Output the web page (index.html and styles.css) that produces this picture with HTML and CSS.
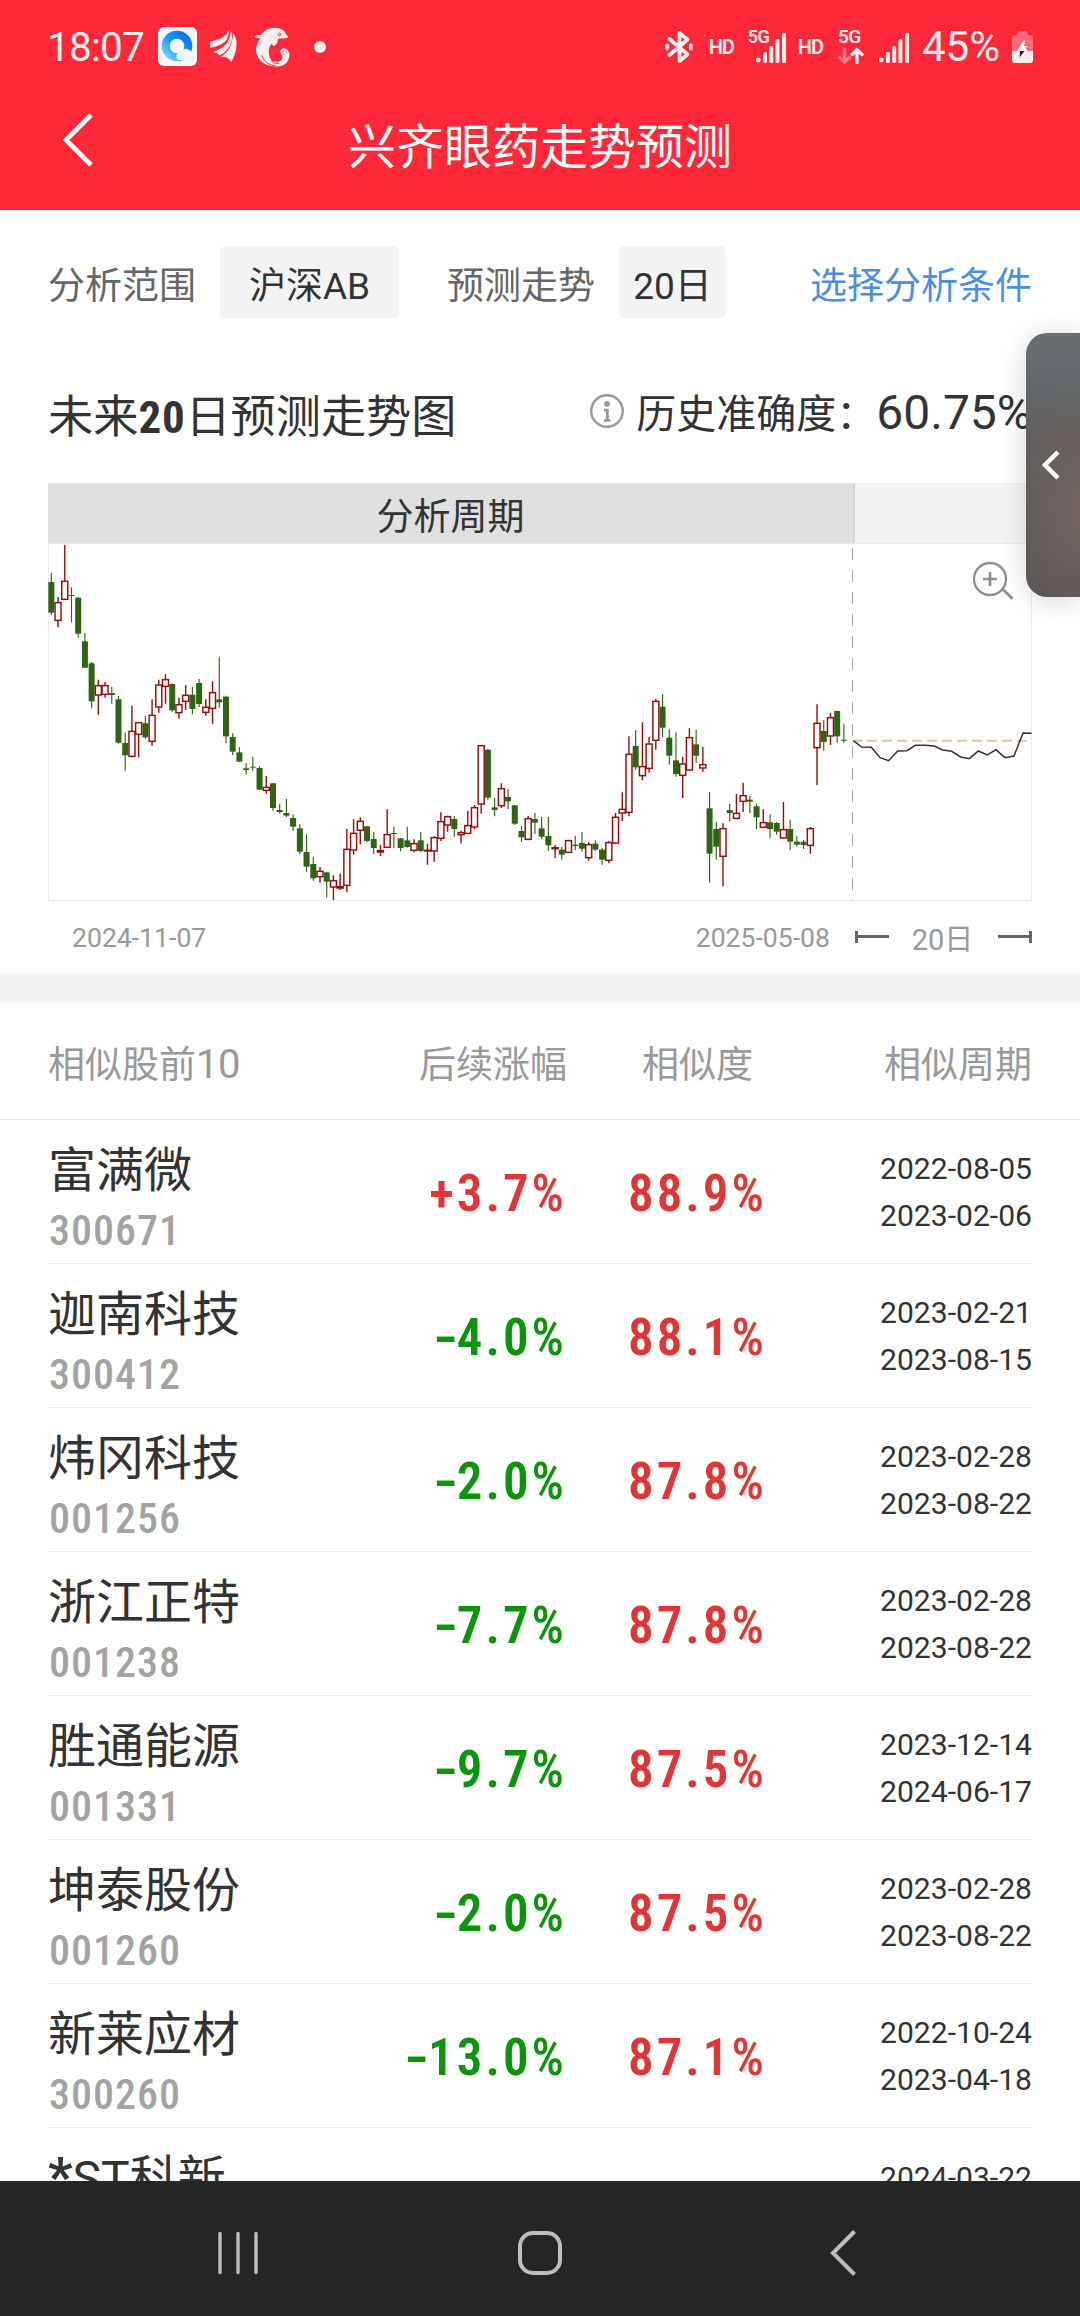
FILE: index.html
```html
<!DOCTYPE html>
<html lang="zh-CN">
<head>
<meta charset="utf-8">
<title>兴齐眼药走势预测</title>
<link rel="stylesheet" href="styles.css">
</head>
<body>
<div class="screen">
  <header class="top">
    <div class="status">
      <div class="status-left">
        <span class="clock">18:07</span>
        <svg class="ic-browser" viewBox="0 0 39 39" width="39" height="39">
          <defs>
            <linearGradient id="ring" x1="0" y1="1" x2="1" y2="0"><stop offset="0" stop-color="#7fd0fb"/><stop offset=".5" stop-color="#0a9bf5"/><stop offset="1" stop-color="#0a6ff0"/></linearGradient>
          </defs>
          <rect width="39" height="39" rx="6" fill="#f6f8fc"/>
          <circle cx="19" cy="19" r="11.3" fill="none" stroke="url(#ring)" stroke-width="8"/>
          <path d="M20 33a4.500 4.500 0 0 1 2-8 6 6 0 0 1 9-2 4 4 0 0 1 3 4 3.500 3.500 0 0 1-1 6z" fill="#edf5fd"/>
        </svg>
        <svg class="ic-wing" viewBox="180 30 90 100" width="30" height="33" fill="#ffeef0">
          <path d="M183 84V66C208 58 228 56 239 30 243 58 226 76 183 84Z"/>
          <path d="M188 98C226 84 243 70 246 32 256 62 242 92 211 107 205 99 198 97 188 98Z"/>
          <path d="M214 113C238 96 252 76 252 38 270 60 265 95 247 128 240 114 230 110 214 113Z"/>
        </svg>
        <svg class="ic-dolphin" viewBox="308 19 112 120" width="37" height="40">
          <path d="M311 50C316 43 322 42 331 43 344 24 368 17 387 22 400 26 406 33 407 40L415 48C411 54 400 53 386 53 381 58 385 68 372 76 367 76 367 69 363 70 353 85 353 108 366 121 384 128 400 121 396 105 392 98 387 95 393 86 405 77 420 90 418 106 415 130 398 139 375 138 343 136 324 122 317 94 316 77 323 62 330 54 324 52 317 49 311 50Z" fill="#ffeef0"/>
          <circle cx="388" cy="41" r="4" fill="none" stroke="#ff2838" stroke-width="3"/>
          <path d="M334 104C343 125 357 134 376 136M363 121Q371 130 386 129" fill="none" stroke="#ff2838" stroke-width="3"/>
          <circle cx="405" cy="96" r="6" fill="none" stroke="#ff8a94" stroke-width="2"/>
        </svg>
        <i class="dot"></i>
      </div>
      <div class="status-right">
        <svg class="ic-bt" viewBox="0 0 28 34" width="28" height="34" fill="none" stroke="#ffeef0" stroke-width="3.800" stroke-linejoin="round" stroke-linecap="round"><path d="M4.500 9 22.500 24.500 14.500 31V3L22.500 9.500 4.500 25M2.200 15.500v3M25.800 15.500v3"/></svg>
        <span class="hd hd-a">HD</span>
        <span class="net net-a">5G</span>
        <svg class="sig-a" viewBox="0 0 30 30" width="30" height="30" fill="#ffeef0"><circle cx="2.300" cy="27" r="2.400"/><rect x="7" y="19" width="4" height="11" rx="1.500"/><rect x="13.200" y="13" width="4" height="17" rx="1.500"/><rect x="19.400" y="6" width="4" height="24" rx="1.500"/><rect x="26" y="0" width="4" height="30" rx="1.500"/></svg>
        <span class="hd hd-b">HD</span>
        <div class="net-b"><span class="net">5G</span>
          <svg viewBox="0 0 26 16" width="26" height="16" fill="none" stroke-width="3.200" stroke-linecap="round" stroke-linejoin="round"><path d="M6.500 1.500V14M1.600 9.500 6.500 14.200 11.400 9.500" stroke="#ff7d88"/><path d="M19 14.500V2M14 6.500 19 1.700 24 6.500" stroke="#fff"/></svg>
        </div>
        <svg class="sig-b" viewBox="0 0 30 30" width="30" height="30" fill="#ffeef0"><circle cx="2.300" cy="27" r="2.400"/><rect x="7" y="19" width="4" height="11" rx="1.500"/><rect x="13.200" y="13" width="4" height="17" rx="1.500"/><rect x="19.400" y="6" width="4" height="24" rx="1.500"/><rect x="26" y="0" width="4" height="30" rx="1.500"/></svg>
        <span class="battery-text">45%</span>
        <svg class="ic-battery" viewBox="0 0 21 32" width="21" height="32"><path d="M7 0h7q1.500 0 1.500 2v2H18q3 0 3 3v14H0V7q0-3 3-3h2.500V2Q5.500 0 7 0Z" fill="#ff6a76"/><path d="M0 20h21v9q0 3-3 3H3q-3 0-3-3Z" fill="#ffeef0"/><path d="M11.500 9.500 5 20h5.500L12 20h3.500l-2-3.500 2.500-1.500h-4l1-5.500Z" fill="#fff"/><path d="M8 20h4.500l-5 6.500Z" fill="#222"/></svg>
      </div>
    </div>
    <div class="titlebar">
      <svg class="back" viewBox="0 0 34 56" width="34" height="56" fill="none" stroke="#fff" stroke-width="4.600"><path d="M30 3 5 28 30 53"/></svg>
      <h1 class="title">兴齐眼药走势预测</h1>
    </div>
  </header>

  <main class="content">
    <section class="filters">
      <span class="label">分析范围</span>
      <button class="chip chip-scope">沪深AB</button>
      <span class="label label-trend">预测走势</span>
      <button class="chip chip-days">20日</button>
      <a class="link">选择分析条件</a>
    </section>

    <section class="heading">
      <h2 class="heading-title">未来<b>20</b>日预测走势图</h2>
      <div class="accuracy">
        <svg viewBox="0 0 34 34" width="34" height="34" fill="none" stroke="#999" stroke-width="2.400"><circle cx="17" cy="17" r="15.800"/><circle cx="17" cy="9.800" r="2.900" fill="#999" stroke="none"/><path d="M14 16h4M14 26.500h6.500" /><path d="M17.300 15v12" stroke-width="3"/></svg>
        <span class="accuracy-label">历史准确度：</span>
        <span class="accuracy-value">60.75%</span>
      </div>
    </section>

    <section class="chart">
      <div class="chart-head"><div class="period">分析周期</div><div class="future"></div></div>
      <svg class="plot" viewBox="0 39 2952 1074" width="984" height="358">
        <rect x="1.500" y="40.500" width="2949" height="1071" fill="none" stroke="#eaeaea" stroke-width="3"/>
        <g id="candles"></g>
        <path d="M2413.500 54V1113" stroke="#aaa" stroke-width="3" stroke-dasharray="36 30"/>
        <path d="M2416 632.500H2937" stroke="#efc096" stroke-width="6" stroke-dasharray="30 15" stroke-dashoffset="4"/>
        <polyline points="2416,632 2441,651 2470,652 2496,683 2522,692 2549,663 2577,662 2602,646 2631,646 2659,648 2684,660 2711,664 2738,681 2764,686 2791,663 2818,675 2844,659 2871,683 2898,678 2925,609 2951,610" fill="none" stroke="#333" stroke-width="4.500"/>
        <g fill="none" stroke="#8f8f8f" stroke-width="7"><circle cx="2826" cy="147" r="48"/><path d="M2826 126v42M2805 147h42M2863 177 2894 206" stroke-width="8"/></g>
      </svg>
      <div class="axis">
        <span class="axis-start">2024-11-07</span>
        <span class="axis-end">2025-05-08</span>
        <i class="mark mark-left"></i>
        <span class="axis-days">20日</span>
        <i class="mark mark-right"></i>
      </div>
    </section>

    <section class="table">
      <div class="row table-head"><span>相似股前<span class="count">10</span></span><span class="c-change">后续涨幅</span><span class="c-sim">相似度</span><span class="c-dates">相似周期</span></div>
      <div class="row"><div class="stock"><span class="name">富满微</span><span class="code">300671</span></div><span class="c-change up">+3.7<em>%</em></span><span class="c-sim up">88.9<em>%</em></span><div class="c-dates"><span>2022-08-05</span><span>2023-02-06</span></div></div>
      <div class="row"><div class="stock"><span class="name">迦南科技</span><span class="code">300412</span></div><span class="c-change down"><i class="sign">-</i>4.0<em>%</em></span><span class="c-sim up">88.1<em>%</em></span><div class="c-dates"><span>2023-02-21</span><span>2023-08-15</span></div></div>
      <div class="row"><div class="stock"><span class="name">炜冈科技</span><span class="code">001256</span></div><span class="c-change down"><i class="sign">-</i>2.0<em>%</em></span><span class="c-sim up">87.8<em>%</em></span><div class="c-dates"><span>2023-02-28</span><span>2023-08-22</span></div></div>
      <div class="row"><div class="stock"><span class="name">浙江正特</span><span class="code">001238</span></div><span class="c-change down"><i class="sign">-</i>7.7<em>%</em></span><span class="c-sim up">87.8<em>%</em></span><div class="c-dates"><span>2023-02-28</span><span>2023-08-22</span></div></div>
      <div class="row"><div class="stock"><span class="name">胜通能源</span><span class="code">001331</span></div><span class="c-change down"><i class="sign">-</i>9.7<em>%</em></span><span class="c-sim up">87.5<em>%</em></span><div class="c-dates"><span>2023-12-14</span><span>2024-06-17</span></div></div>
      <div class="row"><div class="stock"><span class="name">坤泰股份</span><span class="code">001260</span></div><span class="c-change down"><i class="sign">-</i>2.0<em>%</em></span><span class="c-sim up">87.5<em>%</em></span><div class="c-dates"><span>2023-02-28</span><span>2023-08-22</span></div></div>
      <div class="row"><div class="stock"><span class="name">新莱应材</span><span class="code">300260</span></div><span class="c-change down"><i class="sign">-</i>13.0<em>%</em></span><span class="c-sim up">87.1<em>%</em></span><div class="c-dates"><span>2022-10-24</span><span>2023-04-18</span></div></div>
      <div class="row"><div class="stock"><span class="name"><b>*</b>ST科新</span></div><span></span><span></span><div class="c-dates c-dates-top"><span>2024-03-22</span></div></div>
    </section>
  </main>

  <nav class="navbar">
    <svg viewBox="0 0 44 44" width="44" height="44" stroke="#bdbdbd" stroke-width="3.400" stroke-linecap="round"><path d="M4 2.500v39M22 2.500v39M40 2.500v39"/></svg>
    <svg viewBox="0 0 46 46" width="46" height="46" fill="none" stroke="#bdbdbd" stroke-width="4"><rect x="3" y="3" width="40" height="40" rx="13"/></svg>
    <svg viewBox="0 0 44 46" width="44" height="46" fill="none" stroke="#bdbdbd" stroke-width="4"><path d="M34.500 1.500 13 23 34.500 44.500"/></svg>
  </nav>

  <aside class="edge-panel"><svg viewBox="0 0 18 32" width="18" height="32" fill="none" stroke="#fff" stroke-width="4.500"><path d="M16 3 3 16 16 29"/></svg></aside>
</div>
<script src="chart.js"></script>
</body>
</html>
```
FILE: styles.css
```css
* { box-sizing: border-box; }
body { margin: 0; font-family: Roboto, "Noto Sans CJK SC", sans-serif; color: #333; background: #fff; }
h1, h2 { margin: 0; font-weight: 400; }
i { font-style: normal; }
svg { display: block; flex: none; }
.screen { position: relative; display: flex; flex-direction: column; width: 1080px; height: 2316px; overflow: hidden; }

.top { flex: none; height: 210px; background: #ff2838; color: #fff; }
.status { display: flex; justify-content: space-between; height: 93px; padding: 0 47px; color: #ffeef0; }
.status-left, .status-right { display: flex; align-items: center; }
.clock { width: 111px; font-size: 40.500px; letter-spacing: -.8px; }
.ic-wing { margin-left: 12px; }
.ic-dolphin { margin-left: 14px; }
.dot { width: 12px; height: 12px; margin-left: 24px; border-radius: 50%; background: #ffeef0; }
.hd { font-size: 20px; font-weight: 600; line-height: 20px; letter-spacing: -1px; }
.hd-a { margin-left: 16px; }
.net { font-size: 19px; font-weight: 600; line-height: 16px; letter-spacing: -.5px; }
.net-a { align-self: flex-start; margin: 29px 0 0 14px; width: 8px; font-size: 18px; white-space: nowrap; }
.sig-a { margin-top: 3px; }
.hd-b { margin-left: 12px; }
.net-b { display: flex; flex-direction: column; width: 26px; height: 35px; justify-content: space-between; margin-left: 15px; }
.sig-b { margin: 3px 0 0 15px; }
.battery-text { width: 91px; padding-left: 13px; font-size: 42px; letter-spacing: 0; }
.ic-battery { margin-left: 12px; }
.titlebar { display: grid; grid-template-columns: 200px 1fr 200px; height: 117px; }
.back { margin: 19px 0 0 61px; }
.title { margin-top: 20px; text-align: center; font-size: 48px; line-height: 70px; font-weight: 400; color: #fff; }

.content { flex: 1; min-height: 0; overflow: hidden; }
.filters { display: flex; align-items: center; padding: 36px 48px 0; height: 108px; font-size: 37px; }
.label { width: 172px; padding-top: 1px; color: #666; white-space: nowrap; }
.label-trend { width: 172px; margin-left: 48px; }
.chip { height: 72px; padding: 1px 0 0; border: 0; border-radius: 5px; background: #f4f4f4; color: #333; font: inherit; }
.chip-scope { width: 179px; }
.chip-days { width: 107px; }
.link { margin-left: auto; padding-top: 1px; color: #4a90e2; white-space: nowrap; }

.heading { display: flex; justify-content: space-between; height: 165px; padding: 66px 48px 0; white-space: nowrap; }
.heading-title { margin-top: 4px; font-size: 45.200px; line-height: 60px; }
.heading-title b { display: inline-block; width: 47px; font-size: 45px; font-weight: 700; font-stretch: 75%; letter-spacing: 1px; }
.accuracy { display: flex; height: 56px; align-items: center; }
.accuracy svg { margin-top: -2px; }
.accuracy-label { width: 240px; margin: 6px 0 0 12px; font-size: 40px; line-height: 56px; }
.accuracy-value { font-size: 48px; line-height: 56px; margin-top: 2px; }

.chart { height: 490px; padding: 0 48px; }
.chart-head { display: flex; height: 60px; line-height: 69px; font-size: 37px; text-align: center; }
.period { width: 807px; background: #e0e0e0; border-right: 2px solid #d6d6d6; }
.future { flex: 1; background: #f4f4f4; }
.axis { display: flex; align-items: center; height: 72px; color: #999; font-size: 26.600px; padding-left: 24px; }
.axis-end { margin-left: auto; margin-right: 25px; }
.axis-days { width: 109px; padding: 5px 2px 0 0; text-align: center; font-size: 29px; line-height: 40px; }
.mark { width: 34px; height: 12px; background: linear-gradient(#666, #666) 0 4px / 100% 3px no-repeat; border: 0 solid #666; }
.mark-left { border-left-width: 3px; }
.mark-right { border-right-width: 3px; }

.table { border-top: 30px solid #f4f4f4; }
.row { display: grid; grid-template-columns: 300px 215px 266px 203px; height: 144px; margin: 0 48px; align-items: center; border-bottom: 1px solid #ebebeb; }
.row.table-head { height: 117px; margin: 0; padding: 9px 48px 0; color: #999; font-size: 37px; line-height: 54px; border-bottom-color: #e8e8e8; }
.count { font-size: 40px; letter-spacing: -.5px; }
.stock { display: flex; flex-direction: column; align-self: start; padding-top: 16px; white-space: nowrap; }
.name { font-size: 48px; line-height: 70px; }
.name b { font-size: 54px; line-height: 60px; }
.code { margin-left: 1px; font-size: 42px; line-height: 50px; font-weight: 500; font-stretch: 75%; letter-spacing: 1px; color: #a3a3a3; }
.c-change, .c-sim { white-space: nowrap; font-size: 51px; font-weight: 600; font-stretch: 75%; letter-spacing: 3px; padding-top: 3px; }
.c-change { text-align: right; margin-right: -1px; }
.c-sim { text-align: center; }
.c-change em, .c-sim em { font-style: normal; font-weight: 500; letter-spacing: 0; }
.sign { display: inline-block; width: 24px; text-align: left; letter-spacing: 0; transform: scaleX(1.500); transform-origin: 0 50%; }
.c-dates { display: flex; flex-direction: column; align-items: flex-end; color: #333; font-size: 30.100px; line-height: 47px; white-space: nowrap; }
.c-dates-top { align-self: start; padding-top: 26px; }
.table-head .c-change, .table-head .c-sim, .table-head .c-dates { font: inherit; letter-spacing: 0; padding: 0; color: inherit; }
.table-head .c-change { margin-right: -4px; }
.table-head .c-sim { margin-left: 3px; }
.up { color: #e03636; }
.down { color: #0b950b; }

.navbar { flex: none; display: flex; align-items: center; justify-content: space-between; height: 135px; padding: 8px 216px 0; background: #252525; }
.edge-panel { position: absolute; right: 0; top: 333px; width: 54px; height: 264px; border-radius: 21px 0 0 21px; display: flex; align-items: center; padding-left: 16px; background: radial-gradient(90px 150px at 54px 180px, #73645f, rgba(115,100,95,0) 90%), linear-gradient(#676f71, #5e5c5d 45%, #575455); box-shadow: 0 3px 28px rgba(0,0,0,.16); }
```
FILE: chart.js
```js
// Daily candles: [direction, high, low, body top, body bottom], in plot units.
const days = [
["g",129,255,156,248],["r",201,292,217,272],["r",45,210,153,209],["g",172,277,195,198],["g",200,323,203,311],
["g",308,413,334,413],["g",396,535,400,514],["r",449,554,466,496],["r",456,503,466,494],["g",471,521,489,495],
["g",498,641,508,638],["g",608,722,639,676],["r",527,682,603,680],["r",577,682,577,614],["g",558,626,580,622],
["r",508,647,555,635],["r",449,548,464,532],["r",433,521,448,470],["g",460,545,462,541],["r",503,566,523,549],
["r",465,540,495,515],["g",471,553,494,537],["g",447,531,459,522],["r",508,557,531,548],["r",454,581,487,536],
["g",380,533,508,517],["g",497,640,500,619],["g",610,675,621,665],["g",651,695,667,695],["g",699,734,715,720],
["g",680,722,710,713],["g",709,779,714,779],["r",738,791,771,782],["g",759,842,760,834],["g",821,851,840,846],
["g",807,861,849,857],["g",853,902,864,890],["g",883,972,895,965],["g",913,1025,966,1010],
["g",980,1052,1002,1045],["r",1011,1058,1023,1041],["g",1025,1103,1027,1055],["r",1036,1110,1051,1072],["r",1031,1080,1069,1075],
["r",897,1087,957,1067],["r",868,974,909,961],["r",862,943,873,902],["g",888,937,889,933],["g",907,973,927,954],
["r",945,978,961,967],["r",838,954,913,953],["g",890,955,909,911],["g",924,964,925,954],["g",890,953,931,951],
["r",928,967,940,962],["g",906,966,931,963],["r",941,1004,960,964],["r",919,995,922,964],["r",847,933,874,926],
["r",857,905,859,886],["g",858,920,867,897],["r",902,940,907,915],["r",843,912,886,911],["r",825,898,832,892],
["r",645,851,646,823],["g",657,809,659,803],["g",803,859,832,840],["r",760,834,775,828],["g",778,837,801,814],
["g",825,884,826,881],["g",888,936,903,922],["r",858,931,865,929],["g",849,912,867,878],["g",860,926,895,920],
["g",861,962,918,946],["r",945,985,952,957],["g",950,989,959,974],["r",929,970,931,968],["g",917,961,944,948],
["g",906,965,939,956],["r",936,992,943,984],["g",931,962,941,959],["g",953,1004,959,989],["r",933,1000,937,992],
["r",849,943,861,940],["r",787,873,837,850],["r",619,859,672,848],["g",600,719,648,712],["r",577,751,709,738],
["r",620,728,641,716],["r",507,659,513,632],["g",492,621,530,593],["g",598,704,623,677],["g",607,740,691,732],
["r",681,804,701,737],["r",595,723,622,721],["g",599,699,643,677],["r",651,725,703,715],["g",787,1058,835,971],
["g",876,989,897,950],["r",880,1069,895,980],["g",822,873,840,849],["r",792,868,849,866],["r",758,846,796,815],
["g",798,849,809,815],["g",821,897,829,862],["r",838,893,877,893],["g",853,925,877,897],["g",876,914,879,905],
["r",816,926,898,925],["g",869,960,897,935],["g",919,950,935,944],["g",929,957,935,945],["r",891,971,895,947],
["r",523,765,579,654],["g",570,662,603,636],["r",548,645,562,619],["g",543,638,543,619],["g",581,638,629,632]
];
const step = 20.15;
const first = 10;
const ink = { g: "#2f6414", r: "#9c0c0c" };
let marks = "";
days.forEach(([dir, high, low, top, bottom], i) => {
  const x = first + i * step;
  const color = ink[dir];
  if (dir === "g") {
    marks += `<path d="M${x} ${high}V${low}" stroke="${color}" stroke-width="3.4"/>`;
    marks += `<rect x="${x - 9}" y="${top}" width="18" height="${Math.max(3, bottom - top)}" fill="${color}"/>`;
  } else {
    marks += `<path d="M${x} ${high}V${top}M${x} ${bottom}V${low}" stroke="${color}" stroke-width="4.2"/>`;
    marks += `<rect x="${x - 9}" y="${top + 1}" width="18" height="${Math.max(2, bottom - top - 2)}" fill="#fff" stroke="${color}" stroke-width="4.4"/>`;
  }
});
document.getElementById("candles").innerHTML = marks;
```
